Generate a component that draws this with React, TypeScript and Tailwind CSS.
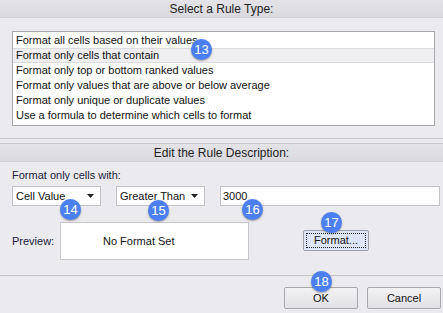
import React from "react";

const rules = [
  "Format all cells based on their values",
  "Format only cells that contain",
  "Format only top or bottom ranked values",
  "Format only values that are above or below average",
  "Format only unique or duplicate values",
  "Use a formula to determine which cells to format",
];

function Badge({ n, className }: { n: number; className: string }) {
  return (
    <div
      className={`absolute flex h-[21px] w-[21px] items-center justify-center rounded-full bg-[#4b7ff2] text-[13px] leading-none text-white shadow-[0_1px_2px_rgba(0,0,0,0.35)] ${className}`}
    >
      {n}
    </div>
  );
}

function Header({ title }: { title: string }) {
  return (
    <div className="flex h-[18px] items-center justify-center border-b border-[#d0d0d4] bg-gradient-to-b from-[#e4e4e8] to-[#dadade] text-[12px] text-[#222]">
      {title}
    </div>
  );
}

function Select({ label, width }: { label: string; width: string }) {
  return (
    <div
      className={`flex h-[20px] items-center justify-between border border-[#c4c4c8] bg-white pl-[3px] pr-[6px] ${width}`}
    >
      <span>{label}</span>
      <svg width="7" height="4" viewBox="0 0 7 4">
        <path d="M0 0h7L3.5 4z" fill="#222" />
      </svg>
    </div>
  );
}

export default function App() {
  return (
    <div className="relative h-[313px] w-[443px] overflow-hidden bg-[#ebebef] font-['Liberation_Sans',sans-serif] text-[11px] text-[#111]">
      <Header title="Select a Rule Type:" />
      <div className="px-[12px] pt-[13px]">
        <div className="h-[95px] w-[423px] border border-[#a8a8ac] bg-white pt-[1px]">
          {rules.map((r, i) => (
            <div
              key={r}
              className={`flex h-[15px] items-center px-[3px] ${
                i === 1 ? "border-y border-[#dcdce0] bg-[#efeff1]" : "border-y border-transparent"
              }`}
            >
              {r}
            </div>
          ))}
        </div>
      </div>
      <div className="mt-[12px] h-[5px] border-t border-[#c8c8cc]" />
      <div className="border-t border-[#c8c8cc]">
        <Header title="Edit the Rule Description:" />
      </div>
      <div className="pl-[12px] pr-[3px] pt-[5px]">
        <div className="flex h-[16px] items-center text-[#1a1a3a]">Format only cells with:</div>
        <div className="mt-[3px] flex items-center gap-[15px]">
          <Select label="Cell Value" width="w-[89px]" />
          <Select label="Greater Than" width="w-[89px]" />
          <div className="flex h-[20px] flex-1 items-center border border-[#c4c4c8] bg-white pl-[2px]">
            3000
          </div>
        </div>
        <div className="mt-[16px] flex items-start">
          <span className="flex h-[38px] w-[48px] items-center text-[#1a1a3a]">Preview:</span>
          <div className="flex h-[38px] w-[189px] items-center border border-[#c8c8cc] bg-white pl-[42px]">
            No Format Set
          </div>
          <div className="ml-[54px] mt-[8px] flex h-[21px] w-[66px] items-center justify-center rounded-[2px] border border-[#a0a0a8] bg-[#dde6f7] p-[2px]">
            <div className="flex h-full w-full items-center justify-center border border-dotted border-[#222]">
              Format...
            </div>
          </div>
        </div>
      </div>
      <div className="mt-[15px] border-t border-[#c4c4c8]" />
      <div className="flex justify-end gap-[9px] pr-[2px] pt-[11px]">
        <button className="h-[22px] w-[74px] rounded-[2px] border border-[#a8a8ac] bg-gradient-to-b from-[#f2f2f4] to-[#e2e2e6]">
          OK
        </button>
        <button className="h-[22px] w-[74px] rounded-[2px] border border-[#a8a8ac] bg-gradient-to-b from-[#f2f2f4] to-[#e2e2e6]">
          Cancel
        </button>
      </div>
      <Badge n={13} className="left-[191px] top-[39px]" />
      <Badge n={14} className="left-[60px] top-[199px]" />
      <Badge n={15} className="left-[148px] top-[200px]" />
      <Badge n={16} className="left-[242px] top-[199px]" />
      <Badge n={17} className="left-[321px] top-[212px]" />
      <Badge n={18} className="left-[311px] top-[271px]" />
    </div>
  );
}
